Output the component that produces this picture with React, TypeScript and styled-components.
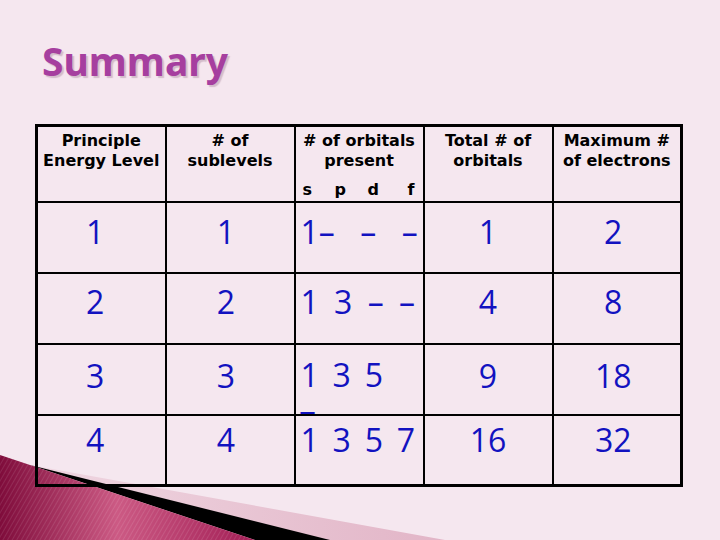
import React from "react";
import styled, { createGlobalStyle } from "styled-components";

const GlobalStyle = createGlobalStyle`
  html, body {
    margin: 0;
    padding: 0;
    background: #f5e7ef;
  }
  body {
    width: 720px;
    height: 540px;
    overflow: hidden;
  }
`;

const Page = styled.div`
  position: relative;
  z-index: 0;
  width: 720px;
  height: 540px;
  box-sizing: border-box;
  padding: 41px 0 0 35px;
  background: #f5e7ef;
  overflow: hidden;
`;

const Title = styled.h1`
  margin: 0 0 0 7px;
  font-family: "Noto Sans", "DejaVu Sans", sans-serif;
  font-weight: bold;
  font-size: 39px;
  line-height: 40px;
  color: #a63f9f;
  text-shadow: 2px 2px 1px rgba(150, 110, 135, 0.35);
`;

const Table = styled.table`
  margin-top: 43px;
  width: 648px;
  table-layout: fixed;
  border-collapse: collapse;
  border: 3px solid #000;
`;

const Head = styled.th`
  box-sizing: border-box;
  height: 76px;
  padding: 3.5px 2px 0;
  border: 2px solid #000;
  vertical-align: top;
  text-align: center;
  font-family: "DejaVu Sans", Verdana, sans-serif;
  font-weight: bold;
  font-size: 16px;
  line-height: 20px;
  color: #000;
`;

const SubLetters = styled.div`
  display: grid;
  grid-template-columns: 32px 33px 40px auto;
  margin-top: 9px;
  padding-left: 5px;
  text-align: left;
`;

const Cell = styled.td<{ $top: number; $shift?: number; $left?: boolean; $ws?: number; $lh?: number }>`
  box-sizing: border-box;
  height: 71px;
  padding: ${(p) => p.$top}px ${(p) => p.$shift ?? 0}px 0 ${(p) => (p.$left ? 5 : 0)}px;
  border: 2px solid #000;
  vertical-align: top;
  text-align: ${(p) => (p.$left ? "left" : "center")};
  white-space: pre;
  word-spacing: ${(p) => p.$ws ?? 0}px;
  font-family: "Open Sans", "DejaVu Sans", sans-serif;
  font-size: 32px;
  line-height: ${(p) => p.$lh ?? 24}px;
  color: #1212c0;
`;

const Decor = styled.svg`
  position: absolute;
  left: 0;
  bottom: 0;
  z-index: -1;
  display: block;
`;

type Row = {
  level: string;
  sub: string;
  orb: string;
  ws: number;
  total: string;
  max: string;
  top: number;
  lh?: number;
};

const rows: Row[] = [
  { level: "1", sub: "1", orb: "1–  –  –", ws: 4.4, total: "1", max: "2", top: 17 },
  { level: "2", sub: "2", orb: "1 3 – –", ws: 7, total: "4", max: "8", top: 16.5 },
  { level: "3", sub: "3", orb: "1 3 5\n_", ws: 5.5, total: "9", max: "18", top: 19.5, lh: 22 },
  { level: "4", sub: "4", orb: "1 3 5 7", ws: 5.5, total: "16", max: "32", top: 12 },
];

function Decoration() {
  return (
    <Decor width="460" height="90" viewBox="0 450 460 90">
      <defs>
        <linearGradient id="crimson" x1="0" y1="0" x2="260" y2="0" gradientUnits="userSpaceOnUse">
          <stop offset="0" stopColor="#7f0c3b" />
          <stop offset="0.45" stopColor="#cc5a84" />
          <stop offset="1" stopColor="#a11c54" />
        </linearGradient>
        <linearGradient id="band" x1="40" y1="0" x2="445" y2="0" gradientUnits="userSpaceOnUse">
          <stop offset="0" stopColor="#efd6e1" />
          <stop offset="1" stopColor="#e2b5c7" />
        </linearGradient>
        <pattern id="hatch" width="4" height="4" patternUnits="userSpaceOnUse" patternTransform="rotate(30)">
          <rect width="1" height="4" fill="rgba(255,255,255,0.10)" />
        </pattern>
      </defs>
      <polygon points="30,465 445,540 255,540" fill="url(#band)" />
      <polygon points="30,465 330,540 255,540" fill="#000" />
      <polygon points="0,455 255,540 0,540" fill="url(#crimson)" />
      <polygon points="0,455 255,540 0,540" fill="url(#hatch)" />
    </Decor>
  );
}

export default function App() {
  return (
    <>
      <GlobalStyle />
      <Page>
        <Decoration />
        <Title>Summary</Title>
        <Table>
          <colgroup>
            <col />
            <col />
            <col />
            <col />
            <col />
          </colgroup>
          <thead>
            <tr>
              <Head>
                Principle
                <br />
                Energy Level
              </Head>
              <Head>
                # of
                <br />
                sublevels
              </Head>
              <Head>
                # of orbitals
                <br />
                present
                <SubLetters>
                  <span>s</span>
                  <span>p</span>
                  <span>d</span>
                  <span>f</span>
                </SubLetters>
              </Head>
              <Head>
                Total # of
                <br />
                orbitals
              </Head>
              <Head>
                Maximum #
                <br />
                of electrons
              </Head>
            </tr>
          </thead>
          <tbody>
            {rows.map((r) => (
              <tr key={r.level}>
                <Cell $top={r.top} $shift={12}>{r.level}</Cell>
                <Cell $top={r.top} $shift={8}>{r.sub}</Cell>
                <Cell $top={r.top} $left $ws={r.ws} $lh={r.lh}>{r.orb}</Cell>
                <Cell $top={r.top}>{r.total}</Cell>
                <Cell $top={r.top} $shift={7}>{r.max}</Cell>
              </tr>
            ))}
          </tbody>
        </Table>
      </Page>
    </>
  );
}
